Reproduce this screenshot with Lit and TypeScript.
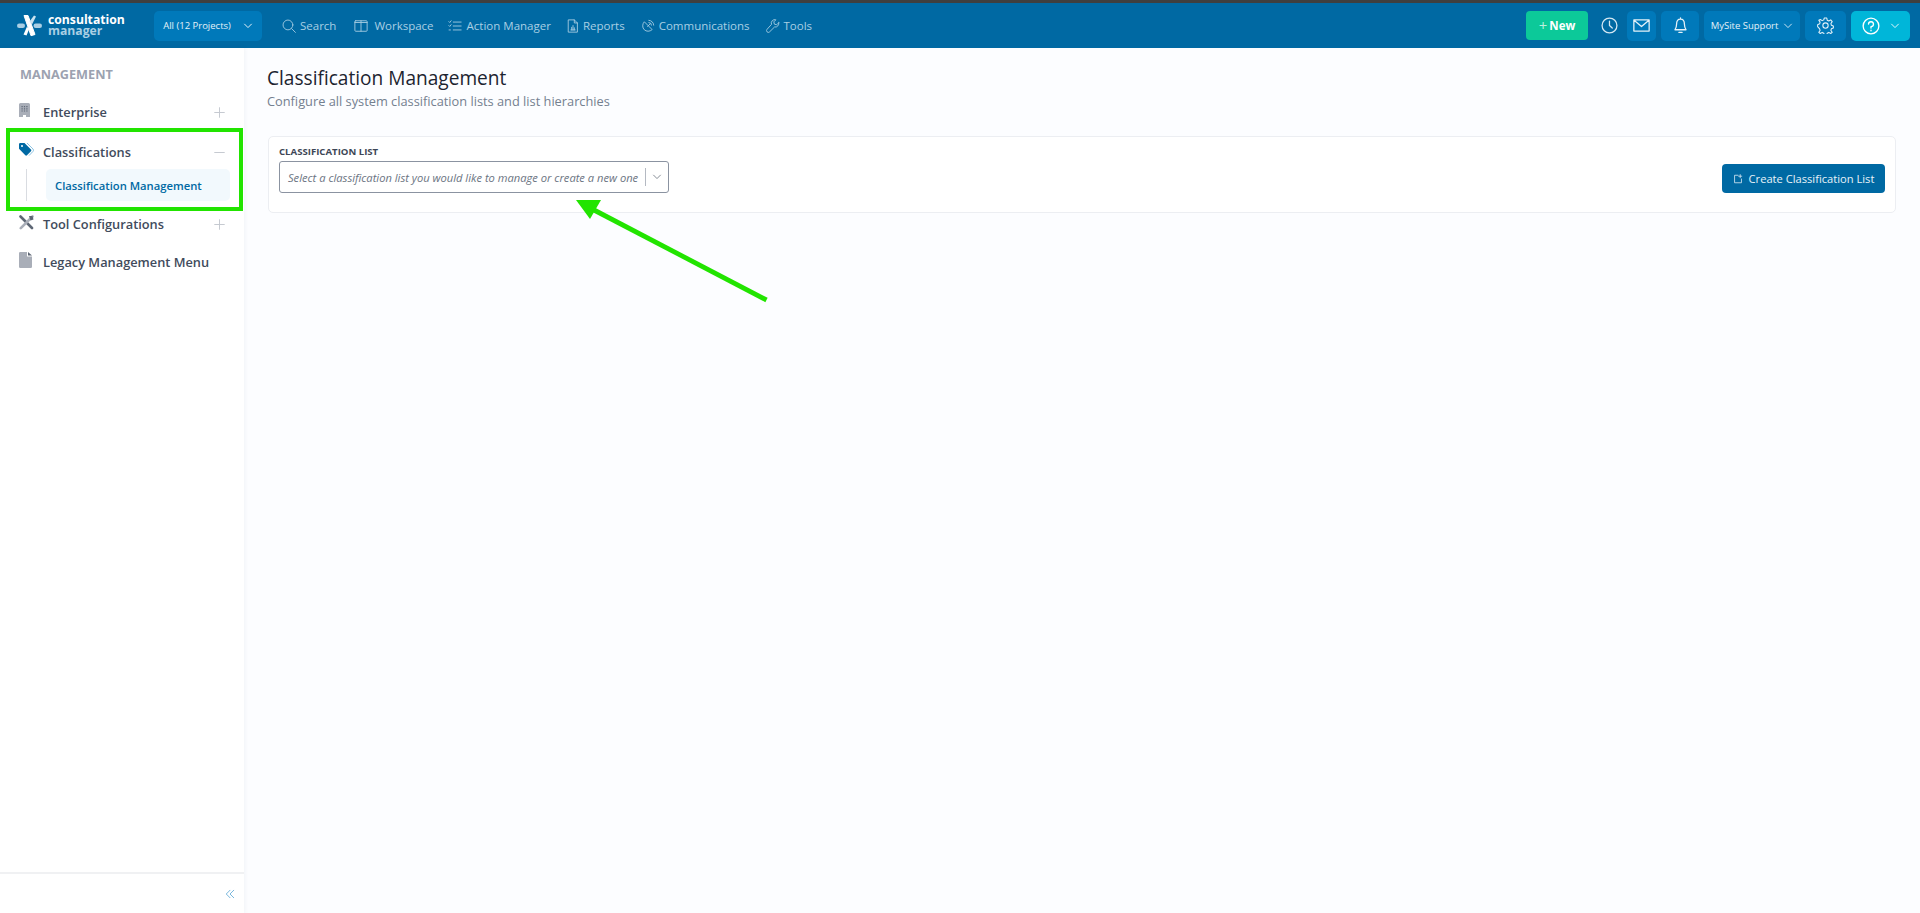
import { LitElement, html, css, svg } from "lit";
import { customElement } from "lit/decorators.js";

const icon = (size: number, body: unknown, stroke = 1.2) => html`<svg
  width=${size}
  height=${size}
  viewBox="0 0 16 16"
  fill="none"
  stroke="currentColor"
  stroke-width=${stroke}
  stroke-linecap="round"
  stroke-linejoin="round"
>${body}</svg>`;

const chevron = svg`<path d="M2.500 5l5.500 5.500L13.500 5" />`;

const navItems = [
  { label: "Search", gap: 4, next: 18, body: svg`<circle cx="6.800" cy="6.800" r="5.600" /><path d="M11 11l4.300 4.300" />` },
  { label: "Workspace", gap: 6, next: 14, body: svg`<rect x="1" y="2" width="14" height="12" rx="1" /><path d="M8 2v12M1 4h14" />` },
  { label: "Action Manager", gap: 5, next: 15, body: svg`<path d="M6 3.500h9M6 8h9M6 12.500h9M1 3l1 1 1.600-2M1 7.500l1 1 1.600-2M1.200 12.500h1.600" />` },
  { label: "Reports", gap: 3, next: 16, body: svg`<path d="M3 1h6.500L13 4.500V15H3zM9.500 1v3.500H13M6.500 12.500V9.500M8 12.500V7.500M9.500 12.500V10M5.500 12.500h5" />` },
  { label: "Communications", gap: 4, next: 16, body: svg`<path d="M3.500 3.500a6.300 6.300 0 0 0 8.900 8.900zM7.500 8.500l3-3M9 1.500a5.500 5.500 0 0 1 5.500 5.500M9 4a3 3 0 0 1 3 3" />` },
  { label: "Tools", gap: 4, next: 0, body: svg`<path d="M14.600 4.200l-2.400 2.400-2.600-.7-.7-2.600 2.400-2.400a4 4 0 0 0-5 5.200L1.200 11.800a2 2 0 0 0 2.900 2.900l5.700-5.600a4 4 0 0 0 4.800-4.900z" />` },
];

const plus = svg`<path d="M8 1v14M1 8h14" />`;
const minus = svg`<path d="M1 8h14" />`;

@customElement("app-root")
export class AppRoot extends LitElement {
  static styles = css`
    :host {
      display: block;
      position: relative;
      height: 913px;
      overflow: hidden;
      background: #fcfdff;
      font-family: "Open Sans", "Liberation Sans", sans-serif;
      color: #3d4656;
    }
    * {
      box-sizing: border-box;
    }
    svg {
      display: block;
      flex: none;
    }
    .strip {
      height: 3px;
      background: #3f3f3f;
    }
    header {
      height: 45px;
      background: #0069a3;
      display: flex;
      align-items: center;
      padding: 0 10px 0 17px;
      color: #a9cfe4;
      font-size: 11.5px;
    }
    .logo {
      display: flex;
      align-items: center;
      gap: 6px;
      width: 137px;
    }
    .logo-text {
      display: flex;
      flex-direction: column;
      font-size: 12.2px;
      font-weight: 700;
      line-height: 10.500px;
      color: #fff;
    }
    .logo-text span + span {
      color: #a9cfe4;
    }
    .pill {
      height: 30px;
      border-radius: 5px;
      background: #0079ba;
      display: flex;
      align-items: center;
      justify-content: center;
      color: #e4f1f8;
    }
    .projects {
      width: 108px;
      gap: 12px;
      font-size: 9.500px;
      margin-right: 20px;
    }
    nav {
      display: flex;
      align-items: center;
    }
    nav a {
      display: flex;
      align-items: center;
    }
    .spacer {
      flex: 1;
    }
    .new {
      width: 62px;
      height: 29px;
      border-radius: 4px;
      background: #0cc999;
      color: #fff;
      font-weight: 700;
      font-size: 11.500px;
      display: flex;
      align-items: center;
      justify-content: center;
      gap: 2px;
      margin-right: 13px;
    }
    .new .sign {
      font-size: 15px;
      font-weight: 400;
      line-height: 15px;
      color: #bdeedd;
    }
    .clock {
      color: #d5e8f3;
      margin-right: 9px;
    }
    .tools {
      display: flex;
      gap: 5px;
    }
    .mail {
      width: 29px;
    }
    .bell {
      width: 38px;
    }
    .site {
      width: 96px;
      gap: 5px;
      font-size: 9.500px;
    }
    .gear {
      width: 41px;
    }
    .help {
      width: 59px;
      gap: 10px;
      background: #00b6d9;
      color: #fff;
    }
    .body {
      display: flex;
      height: 865px;
    }
    aside {
      width: 244px;
      background: #fff;
      box-shadow: 0 0 5px rgba(40, 60, 90, 0.08);
      display: flex;
      flex-direction: column;
      padding-top: 17px;
    }
    .head {
      font-size: 12.700px;
      font-weight: 700;
      color: #9ca2b0;
      line-height: 18px;
      padding-left: 20px;
      margin-bottom: 12px;
    }
    .item {
      height: 34px;
      margin-bottom: 6px;
      display: flex;
      align-items: center;
      padding: 0 19px 0 19px;
      font-size: 12.800px;
      font-weight: 600;
      color: #414b5c;
    }
    .item.open {
      margin-bottom: 0;
    }
    .item.tight {
      margin-bottom: 4px;
    }
    .item .ico {
      width: 24px;
      color: #a9aeb8;
      margin-bottom: 4px;
    }
    .item .label {
      flex: 1;
    }
    .item .sign {
      color: #c4c8cf;
    }
    .item.open .ico {
      color: #0069a3;
    }
    .sub {
      display: flex;
      height: 32px;
      padding-left: 26px;
      margin-bottom: 6px;
    }
    .sub .rail {
      width: 1px;
      background: #d9dce1;
    }
    .sub .link {
      flex: 1;
      margin: 0 14px 0 19px;
      border-radius: 5px;
      background: #f2f9fd;
      color: #0069a3;
      font-size: 11.250px;
      font-weight: 600;
      display: flex;
      align-items: center;
      padding-left: 9px;
    }
    .grow {
      flex: 1;
    }
    .collapse {
      height: 41px;
      border-top: 2px solid #f0f1f3;
      display: flex;
      align-items: center;
      justify-content: flex-end;
      padding-right: 9px;
      color: #4d9fd0;
    }
    main {
      flex: 1;
      padding: 17px 24px 0 23px;
    }
    h1 {
      margin: 0;
      font-size: 19.100px;
      font-weight: 400;
      line-height: 26px;
      color: #1c2430;
    }
    .subtitle {
      font-size: 12.800px;
      line-height: 20px;
      color: #74808f;
      margin-bottom: 25px;
    }
    .card {
      height: 77px;
      margin-left: 1px;
      background: #fff;
      border: 1px solid #eceef2;
      border-radius: 5px;
      display: flex;
      align-items: flex-start;
      justify-content: space-between;
      padding: 7px 10px;
    }
    .field-label {
      font-size: 9.600px;
      font-weight: 700;
      line-height: 15px;
      color: #3d4656;
      margin-bottom: 2px;
    }
    .select {
      width: 390px;
      height: 32px;
      border: 1px solid #8b93a1;
      border-radius: 3px;
      display: flex;
      align-items: center;
      padding: 0 6px 0 8px;
      font-size: 11.170px;
      font-style: italic;
      color: #6b7482;
    }
    .select .text {
      flex: 1;
      white-space: nowrap;
    }
    .select .bar {
      width: 1px;
      height: 18px;
      background: #b4b9c2;
      margin-right: 6px;
    }
    .select .caret {
      color: #5f6773;
    }
    .create {
      width: 163px;
      height: 29px;
      margin-top: 20px;
      border-radius: 4px;
      background: #0069a3;
      color: #e8f3f9;
      font-size: 11.150px;
      font-weight: 500;
      display: flex;
      align-items: center;
      justify-content: center;
      gap: 6px;
    }
    .highlight {
      position: absolute;
      left: 6px;
      top: 128px;
      width: 237px;
      height: 83px;
      border: 4px solid #22e400;
      pointer-events: none;
    }
    .arrow {
      position: absolute;
      left: 570px;
      top: 195px;
      pointer-events: none;
    }
  `;

  render() {
    return html`
      <div class="strip"></div>
      <header>
        <div class="logo">
          <svg width="25" height="25" viewBox="0 0 25 25">
            <path d="M7 2.500l4 0 7 19-4 1.200z" fill="#fff" stroke="#fff" stroke-linejoin="round" />
            <path d="M17 2.500l2 1-4 8-2.500-3z" fill="#c9e2f0" />
            <path d="M10 13.500l2 3-2.500 6-3-1z" fill="#fff" />
            <rect x="0" y="10.500" width="8" height="4.400" rx="2.200" fill="#a9cfe4" />
            <rect x="16.500" y="10.500" width="8.500" height="4.400" rx="2.200" fill="#a9cfe4" />
          </svg>
          <div class="logo-text"><span>consultation</span><span>manager</span></div>
        </div>
        <div class="pill projects">
          <span>All (12 Projects)</span>
          ${icon(10, chevron, 1.6)}
        </div>
        <nav>
          ${navItems.map(
            (n) => html`<a style="gap:${n.gap}px;margin-right:${n.next}px">${icon(14, n.body, 1)}<span>${n.label}</span></a>`
          )}
        </nav>
        <div class="spacer"></div>
        <div class="new"><span class="sign">+</span><span>New</span></div>
        <div class="clock">
          ${icon(17, svg`<circle cx="8" cy="8" r="7" /><path d="M8 3.800V8l2.600 2.400" />`)}
        </div>
        <div class="tools">
          <div class="pill mail">
            ${icon(17, svg`<path d="M.8 2.800h14.400v10.400H.8zM1 3l7 6 7-6" stroke-linecap="butt" />`)}
          </div>
          <div class="pill bell">
            ${icon(17, svg`<path d="M2.800 12c1-1.500 1.500-2.700 1.500-5.200C4.300 4 5.800 2 8 2s3.700 2 3.700 4.800c0 2.500.5 3.700 1.500 5.200zM8 2V.8M6.500 14.500h3" />`)}
          </div>
          <div class="pill site">
            <span>MySite Support</span>
            ${icon(10, chevron, 1.4)}
          </div>
          <div class="pill gear">
            ${icon(17, svg`<circle cx="8" cy="8" r="2.500" /><path d="M6.800 1h2.400l.4 2 1.500.7 1.800-1 1.400 1.700-1.200 1.700.4 1.600 1.900.8v1.800l-1.900.8-.4 1.600 1.200 1.700-1.400 1.100-1.800-1-1.500.7-.4 2H6.800l-.4-2-1.500-.7-1.800 1-1.400-1.100 1.200-1.700-.4-1.600L.6 9V7.200l1.900-.8.400-1.600-1.200-1.700L3.100 2.400l1.800 1 1.500-.7z" />`, 1)}
          </div>
          <div class="pill help">
            ${icon(18, svg`<circle cx="8" cy="8" r="7" /><path d="M5.800 6.200A2.200 2.200 0 1 1 8 8.600v1.200M8 11.800v.4" />`)}
            ${icon(10, chevron, 1.4)}
          </div>
        </div>
      </header>
      <div class="body">
        <aside>
          <div class="head">MANAGEMENT</div>
          <div class="item">
            <span class="ico">
              <svg width="11" height="14" viewBox="0 0 11 14" fill="currentColor">
                <path d="M1.500 0h8A1.500 1.500 0 0 1 11 1.500V14H7v-2H4v2H0V1.500A1.500 1.500 0 0 1 1.500 0z" />
                <path d="M2.500 3h1.200v1.200H2.500zM4.900 3h1.200v1.200H4.900zM7.300 3h1.200v1.200H7.300zM2.500 5.200h1.200v1.200H2.500zM4.900 5.200h1.200v1.200H4.900zM7.300 5.200h1.200v1.200H7.300zM2.500 7.400h1.200v1.200H2.500zM4.900 7.400h1.200v1.200H4.900zM7.300 7.400h1.200v1.200H7.300z" fill="#5e6775" />
              </svg>
            </span>
            <span class="label">Enterprise</span>
            <span class="sign">${icon(11, plus, 1.4)}</span>
          </div>
          <div class="item open">
            <span class="ico">
              <svg width="15" height="14" viewBox="0 0 15 14" fill="currentColor">
                <path d="M0 1.200A1.200 1.200 0 0 1 1.200 0h4.300L12 6.500a1.200 1.200 0 0 1 0 1.700L8 12.300a1.200 1.200 0 0 1-1.700 0L0 5.700z" />
                <path d="M8 0l6 6a1.700 1.700 0 0 1 0 2.400L10 12.600" fill="none" stroke="#8dc3e2" stroke-width="1" />
                <circle cx="3" cy="3" r="1" fill="#fff" />
              </svg>
            </span>
            <span class="label">Classifications</span>
            <span class="sign">${icon(11, minus, 1.4)}</span>
          </div>
          <div class="sub">
            <div class="rail"></div>
            <div class="link">Classification Management</div>
          </div>
          <div class="item tight">
            <span class="ico">
              <svg width="15" height="15" viewBox="0 0 15 15">
                <path d="M1.500 1.500L13 13" stroke="#5e6775" stroke-width="2.600" stroke-linecap="round" />
                <path d="M13.500 1.500L1.800 13.200" stroke="#a9aeb8" stroke-width="2.600" stroke-linecap="round" />
                <path d="M10 1l3.500 0 1 3.500-3 1z" fill="#5e6775" />
              </svg>
            </span>
            <span class="label">Tool Configurations</span>
            <span class="sign">${icon(11, plus, 1.4)}</span>
          </div>
          <div class="item">
            <span class="ico">
              <svg width="13" height="16" viewBox="0 0 13 16" fill="currentColor">
                <path d="M1.200 0H8v4.500h5v10.300a1.200 1.200 0 0 1-1.200 1.200H1.200A1.200 1.200 0 0 1 0 14.800V1.200A1.200 1.200 0 0 1 1.200 0z" />
                <path d="M9 0l4 3.500H9z" fill="#5e6775" />
              </svg>
            </span>
            <span class="label">Legacy Management Menu</span>
          </div>
          <div class="grow"></div>
          <div class="collapse">
            ${icon(10, svg`<path d="M8 2L2 8l6 6M14 2L8 8l6 6" />`, 1.2)}
          </div>
        </aside>
        <main>
          <h1>Classification Management</h1>
          <div class="subtitle">Configure all system classification lists and list hierarchies</div>
          <div class="card">
            <div>
              <div class="field-label">CLASSIFICATION LIST</div>
              <div class="select">
                <span class="text">Select a classification list you would like to manage or create a new one</span>
                <span class="bar"></span>
                <span class="caret">${icon(10, chevron, 1.2)}</span>
              </div>
            </div>
            <div class="create">
              ${icon(10, svg`<path d="M8 2H2.500v12h11V8M11.500 1v5M9 3.500h5" />`)}
              <span>Create Classification List</span>
            </div>
          </div>
        </main>
      </div>
      <div class="highlight"></div>
      <svg class="arrow" width="210" height="115" viewBox="0 0 210 115">
        <path d="M196.500 105L24 15" stroke="#22e400" stroke-width="4.800" />
        <path d="M6 5L31 5L20 24z" fill="#22e400" />
      </svg>
    `;
  }
}
